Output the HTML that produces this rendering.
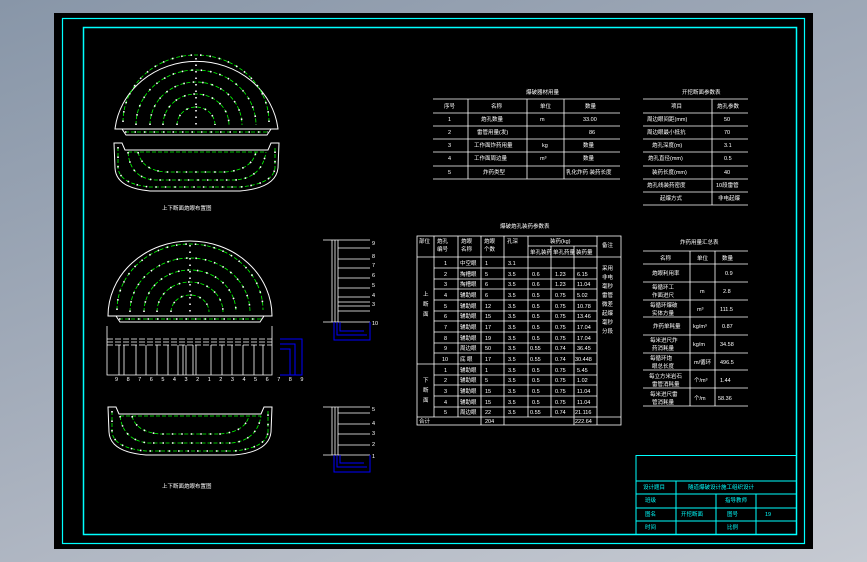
<!DOCTYPE html>
<html><head><meta charset="utf-8"><style>
html,body{margin:0;padding:0;width:867px;height:562px;overflow:hidden;background:linear-gradient(160deg,#8896a8 0%,#a9b1be 55%,#c6cad2 100%);}
svg{position:absolute;left:0;top:0}
text{font-family:"Liberation Sans","Noto Sans CJK SC",sans-serif;fill:#fff;font-size:5.5px}
.c text{fill:#00ffff}
</style></head><body>
<svg width="867" height="562" viewBox="0 0 867 562">
<rect x="54" y="13" width="759" height="536" fill="#000"/>
<rect x="62.5" y="18.5" width="742" height="525" fill="none" stroke="#00ffff" stroke-width="1.2"/>
<rect x="83.5" y="27.5" width="713" height="507" fill="none" stroke="#00ffff" stroke-width="1.5"/>

<!-- Dome 1 -->
<g fill="none">
<path d="M115,129 A82,76 0 0 1 278,129 Z" stroke="#fff" stroke-width="1"/>
<path d="M122,129 L126,135 L267,135 L271,129" stroke="#fff"/>
<g stroke="#0f0" stroke-dasharray="4 2" stroke-width="0.8">
<path d="M123,122 A73,67 0 0 1 269,122"/><path d="M136,125 A60,55 0 0 1 256,125"/>
<path d="M150,125 A46,43 0 0 1 242,125"/><path d="M163,125 A33,31 0 0 1 229,125"/>
<path d="M177,125 A19,18 0 0 1 215,125"/><path d="M125,132 L268,132"/>
</g>
<g stroke="#fff" stroke-dasharray="1.5 8" stroke-width="1.6">
<path d="M123,122 A73,67 0 0 1 269,122"/><path d="M136,125 A60,55 0 0 1 256,125"/>
<path d="M150,125 A46,43 0 0 1 242,125"/><path d="M163,125 A33,31 0 0 1 229,125"/>
<path d="M177,125 A19,18 0 0 1 215,125"/><path d="M125,132 L268,132"/>
<path d="M196,58 L196,125" stroke-dasharray="1.5 5"/>
</g>
<!-- Bench 1 -->
<path d="M114,143 L122,143 L125,150 L268,150 L271,143 L279,143 L278,168 Q276,188 240,191 L150,191 Q116,188 115,168 Z" stroke="#fff"/>
<g stroke="#0f0" stroke-dasharray="4 2" stroke-width="0.8">
<path d="M118,147 L118,168 Q120,184 150,187 L240,187 Q273,184 275,168 L275,147"/>
<path d="M128,152 Q130,178 155,180 L235,180 Q262,178 266,152"/>
<path d="M138,152 Q142,170 165,172 L225,172 Q252,170 256,152"/>
<path d="M128,152 L266,152"/>
</g>
<g stroke="#fff" stroke-dasharray="1.5 8" stroke-width="1.6">
<path d="M118,147 L118,168 Q120,184 150,187 L240,187 Q273,184 275,168 L275,147"/>
<path d="M128,152 Q130,178 155,180 L235,180 Q262,178 266,152"/>
<path d="M138,152 Q142,170 165,172 L225,172 Q252,170 256,152"/>
</g>

<!-- Dome 2 -->
<path d="M108,316 A82,75 0 0 1 272,316 Z" stroke="#fff"/>
<path d="M116,316 L120,322 L260,322 L264,316" stroke="#fff"/>
<g stroke="#0f0" stroke-dasharray="4 2" stroke-width="0.8">
<path d="M117,310 A73,66 0 0 1 263,310"/><path d="M130,312 A60,54 0 0 1 250,312"/>
<path d="M144,312 A46,42 0 0 1 236,312"/><path d="M157,312 A33,30 0 0 1 223,312"/>
<path d="M171,312 A19,17 0 0 1 209,312"/><path d="M119,319 L262,319"/>
</g>
<g stroke="#fff" stroke-dasharray="1.5 8" stroke-width="1.6">
<path d="M117,310 A73,66 0 0 1 263,310"/><path d="M130,312 A60,54 0 0 1 250,312"/>
<path d="M144,312 A46,42 0 0 1 236,312"/><path d="M157,312 A33,30 0 0 1 223,312"/>
<path d="M171,312 A19,17 0 0 1 209,312"/><path d="M119,319 L262,319"/>
<path d="M190,245 L190,312" stroke-dasharray="1.5 5"/>
</g>
<!-- Section -->
<g stroke="#fff" stroke-width="0.8">
<path d="M107,326 L107,375 L272,375 L272,326"/>
<path d="M107,339 L272,339 M107,342 L272,342 M107,345 L272,345" stroke-dasharray="6 2"/>
<path d="M119,345 V375 M124,345 V375 M136,345 V375 M146,345 V375 M157,345 V375 M168,345 V375 M178,345 V375 M183,345 V375 M186,345 V375 M193,345 V375 M196,345 V375 M211,345 V375 M222,345 V375 M232,345 V375 M243,345 V375 M254,345 V375 M263,345 V375"/>
</g>
<text x="115" y="381" font-size="7" letter-spacing="3.5">9 8 7 6 5 4 3 2 1 2 3 4 5 6 7 8 9</text>
<path d="M280,339 H302 V375 H280 M280,344 H295 V375 M280,349 H290 V375" stroke="#00f" stroke-width="1"/>
<!-- Bench 2 -->
<path d="M108,407 L116,407 L119,414 L261,414 L264,407 L272,407 L271,432 Q269,452 234,455 L146,455 Q110,452 109,432 Z" stroke="#fff"/>
<g stroke="#0f0" stroke-dasharray="4 2" stroke-width="0.8">
<path d="M112,411 L112,432 Q114,448 146,451 L234,451 Q266,448 268,432 L268,411"/>
<path d="M120,416 Q123,440 148,443 L232,443 Q257,440 261,416"/>
<path d="M132,416 Q136,432 160,434 L220,434 Q245,432 249,416"/>
<path d="M120,416 L261,416"/>
</g>
<g stroke="#fff" stroke-dasharray="1.5 8" stroke-width="1.6">
<path d="M112,411 L112,432 Q114,448 146,451 L234,451 Q266,448 268,432 L268,411"/>
<path d="M120,416 Q123,440 148,443 L232,443 Q257,440 261,416"/>
<path d="M132,416 Q136,432 160,434 L220,434 Q245,432 249,416"/>
</g>
<!-- side views -->
<g stroke="#fff" stroke-width="0.8">
<path d="M323,240 H370 M323,322 H370 M332,240 V322 M335,240 V322 M338,240 V322" />
<path d="M338,248 H370 M338,259 H370 M338,268 H370 M338,278 H370 M338,288 H370 M338,297 H370 M338,302 H370 M338,306 H370 M338,311 H370"/>
<path d="M323,407 H370 M323,455 H370 M332,407 V455 M335,407 V455 M338,407 V455"/>
<path d="M338,413 H370 M338,424 H370 M338,434 H370 M338,445 H370"/>
</g>
<path d="M334,322 V340 H370 V322 M337,322 V335 H367 M340,322 V331 H364" stroke="#00f"/>
<path d="M334,455 V472 H370 V455 M337,455 V467 H367 M340,455 V463 H364" stroke="#00f"/>
</g>
<g font-size="6.5"><text x="372" y="245">9</text><text x="372" y="258">8</text><text x="372" y="267">7</text><text x="372" y="277">6</text><text x="372" y="287">5</text><text x="372" y="297">4</text><text x="372" y="306">3</text><text x="372" y="325">10</text>
<text x="372" y="411">5</text><text x="372" y="425">4</text><text x="372" y="435">3</text><text x="372" y="446">2</text><text x="372" y="458">1</text></g>
<text x="162" y="210">上下断面炮眼布置图</text>
<text x="162" y="488">上下断面炮眼布置图</text>

<!-- Table 1 -->
<text x="526" y="94">爆破器材用量</text>
<g stroke="#fff" stroke-width="0.8" fill="none">
<path d="M433,99 H620 M433,113 H620 M433,126 H620 M433,139 H620 M433,152 H620 M433,166 H620 M433,179 H620 M468,99 V179 M527,99 V179 M564,99 V179"/>
</g>
<text x="444" y="108">序号</text><text x="491" y="108">名称</text><text x="540" y="108">单位</text><text x="585" y="108">数量</text>
<text x="448" y="121">1</text><text x="481" y="121">炮孔数量</text><text x="540" y="121">m</text><text x="583" y="121">33.00</text>
<text x="448" y="134">2</text><text x="477" y="134">雷管用量(发)</text><text x="589" y="134">86</text>
<text x="448" y="147">3</text><text x="474" y="147">工作面炸药用量</text><text x="542" y="147">kg</text><text x="583" y="147">数量</text>
<text x="448" y="160">4</text><text x="474" y="160">工作面周边量</text><text x="540" y="160">m³</text><text x="583" y="160">数量</text>
<text x="448" y="174">5</text><text x="483" y="174">炸药类型</text><text x="566" y="174">乳化炸药 装药长度</text>
<!-- Table 2 -->
<text x="682" y="94">开挖断面参数表</text>
<g stroke="#fff" stroke-width="0.8" fill="none">
<path d="M643,99 H748 M643,113 H748 M643,126 H748 M643,139 H748 M643,152 H748 M643,166 H748 M643,179 H748 M643,192 H748 M643,205 H748 M712,99 V205"/>
</g>
<text x="671" y="108">项目</text><text x="717" y="108">炮孔参数</text>
<text x="647" y="121">周边眼间距(mm)</text><text x="724" y="121">50</text>
<text x="647" y="134">周边眼最小抵抗</text><text x="724" y="134">70</text>
<text x="652" y="147">炮孔深度(m)</text><text x="724" y="147">3.1</text>
<text x="648" y="160">炮孔直径(mm)</text><text x="724" y="160">0.5</text>
<text x="652" y="174">装药长度(mm)</text><text x="724" y="174">40</text>
<text x="647" y="187">炮孔线装药密度</text><text x="716" y="187">10段雷管</text>
<text x="660" y="200">起爆方式</text><text x="718" y="200">非电起爆</text>
<!-- Table 3 -->
<text x="500" y="228">爆破炮孔装药参数表</text>
<g stroke="#fff" stroke-width="0.8" fill="none">
<rect x="417" y="236" width="204" height="189"/>
<path d="M417,257 H597 M434,268 H597 M434,279 H597 M434,289 H597 M434,300 H597 M434,311 H597 M434,321 H597 M434,332 H597 M434,343 H597 M434,353 H597 M417,364 H597 M434,375 H597 M434,385 H597 M434,396 H597 M434,407 H597 M417,417 H621 M597,257 H621"/>
<path d="M434,236 V417 M458,236 V417 M481,236 V425 M504,236 V425 M528,236 V417 M551,246 V417 M574,246 V425 M597,236 V425 M528,246 H597"/>
</g>
<text x="419" y="243">部位</text><text x="437" y="243">炮孔</text><text x="437" y="251">编号</text><text x="461" y="243">炮眼</text><text x="461" y="251">名称</text><text x="484" y="243">炮眼</text><text x="484" y="251">个数</text><text x="507" y="243">孔深</text><text x="550" y="243">装药(kg)</text><text x="530" y="254">单孔装药</text><text x="553" y="254">单孔药量</text><text x="576" y="254">装药量</text><text x="602" y="247">备注</text>
<text x="423" y="296">上</text><text x="423" y="306">断</text><text x="423" y="316">面</text>
<text x="423" y="382">下</text><text x="423" y="392">断</text><text x="423" y="402">面</text>
<text x="419" y="423">合计</text><text x="485" y="423">204</text><text x="575" y="423">222.64</text>
<g font-size="5">
<text x="444" y="265">1</text><text x="460" y="265">中空眼</text><text x="485" y="265">1</text><text x="508" y="265">3.1</text>
<text x="444" y="276">2</text><text x="460" y="276">掏槽眼</text><text x="485" y="276">5</text><text x="508" y="276">3.5</text><text x="532" y="276">0.6</text><text x="555" y="276">1.23</text><text x="577" y="276">6.15</text>
<text x="444" y="286">3</text><text x="460" y="286">掏槽眼</text><text x="485" y="286">6</text><text x="508" y="286">3.5</text><text x="532" y="286">0.6</text><text x="555" y="286">1.23</text><text x="577" y="286">11.04</text>
<text x="444" y="297">4</text><text x="460" y="297">辅助眼</text><text x="485" y="297">6</text><text x="508" y="297">3.5</text><text x="532" y="297">0.5</text><text x="555" y="297">0.75</text><text x="577" y="297">5.02</text>
<text x="444" y="308">5</text><text x="460" y="308">辅助眼</text><text x="485" y="308">12</text><text x="508" y="308">3.5</text><text x="532" y="308">0.5</text><text x="555" y="308">0.75</text><text x="577" y="308">10.78</text>
<text x="444" y="318">6</text><text x="460" y="318">辅助眼</text><text x="485" y="318">15</text><text x="508" y="318">3.5</text><text x="532" y="318">0.5</text><text x="555" y="318">0.75</text><text x="577" y="318">13.46</text>
<text x="444" y="329">7</text><text x="460" y="329">辅助眼</text><text x="485" y="329">17</text><text x="508" y="329">3.5</text><text x="532" y="329">0.5</text><text x="555" y="329">0.75</text><text x="577" y="329">17.04</text>
<text x="444" y="340">8</text><text x="460" y="340">辅助眼</text><text x="485" y="340">19</text><text x="508" y="340">3.5</text><text x="532" y="340">0.5</text><text x="555" y="340">0.75</text><text x="577" y="340">17.04</text>
<text x="444" y="350">9</text><text x="460" y="350">周边眼</text><text x="485" y="350">50</text><text x="508" y="350">3.5</text><text x="530" y="350">0.55</text><text x="555" y="350">0.74</text><text x="577" y="350">36.45</text>
<text x="442" y="361">10</text><text x="460" y="361">底 眼</text><text x="485" y="361">17</text><text x="508" y="361">3.5</text><text x="530" y="361">0.55</text><text x="555" y="361">0.74</text><text x="575" y="361">30.448</text>
<text x="444" y="372">1</text><text x="460" y="372">辅助眼</text><text x="485" y="372">1</text><text x="508" y="372">3.5</text><text x="532" y="372">0.5</text><text x="555" y="372">0.75</text><text x="577" y="372">5.45</text>
<text x="444" y="382">2</text><text x="460" y="382">辅助眼</text><text x="485" y="382">5</text><text x="508" y="382">3.5</text><text x="532" y="382">0.5</text><text x="555" y="382">0.75</text><text x="577" y="382">1.02</text>
<text x="444" y="393">3</text><text x="460" y="393">辅助眼</text><text x="485" y="393">15</text><text x="508" y="393">3.5</text><text x="532" y="393">0.5</text><text x="555" y="393">0.75</text><text x="577" y="393">11.04</text>
<text x="444" y="404">4</text><text x="460" y="404">辅助眼</text><text x="485" y="404">15</text><text x="508" y="404">3.5</text><text x="532" y="404">0.5</text><text x="555" y="404">0.75</text><text x="577" y="404">11.04</text>
<text x="444" y="414">5</text><text x="460" y="414">周边眼</text><text x="485" y="414">22</text><text x="508" y="414">3.5</text><text x="530" y="414">0.55</text><text x="555" y="414">0.74</text><text x="575" y="414">21.116</text>
<text x="602" y="270">采用</text><text x="602" y="279">非电</text><text x="602" y="288">毫秒</text><text x="602" y="297">雷管</text><text x="602" y="306">微差</text><text x="602" y="315">起爆</text><text x="602" y="324">毫秒</text><text x="602" y="333">分段</text>
</g>
<!-- Table 4 -->
<text x="680" y="244">炸药用量汇总表</text>
<g stroke="#fff" stroke-width="0.8" fill="none">
<path d="M643,251 H748 M643,264 H748 M643,282 H748 M643,300 H748 M643,317 H748 M643,335 H748 M643,353 H748 M643,370 H748 M643,388 H748 M643,406 H748 M690,251 V406 M715,251 V406"/>
</g>
<text x="660" y="260">名称</text><text x="697" y="260">单位</text><text x="722" y="260">数量</text>
<text x="652" y="275">炮眼利用率</text><text x="725" y="275">0.9</text>
<text x="652" y="289">每循环工</text><text x="652" y="297">作面进尺</text><text x="700" y="293">m</text><text x="723" y="293">2.8</text>
<text x="650" y="307">每循环爆破</text><text x="652" y="315">实体方量</text><text x="697" y="311">m³</text><text x="720" y="311">111.5</text>
<text x="653" y="328">炸药单耗量</text><text x="693" y="328">kg/m³</text><text x="722" y="328">0.87</text>
<text x="650" y="342">每米进尺炸</text><text x="652" y="350">药消耗量</text><text x="693" y="346">kg/m</text><text x="720" y="346">34.58</text>
<text x="650" y="360">每循环炮</text><text x="652" y="368">眼总长度</text><text x="694" y="364">m/循环</text><text x="720" y="364">496.5</text>
<text x="649" y="378">每立方米岩石</text><text x="652" y="386">雷管消耗量</text><text x="694" y="382">个/m³</text><text x="720" y="382">1.44</text>
<text x="650" y="396">每米进尺雷</text><text x="652" y="404">管消耗量</text><text x="694" y="400">个/m</text><text x="718" y="400">58.36</text>

<!-- Title block -->
<g class="c">
<path d="M636,534 V455.5 H796 M636,481 H796 M636,494 H796 M636,508 H796 M636,521 H796 M676,481 V534 M716,494 V534 M756,494 V534" stroke="#00ffff" stroke-width="1" fill="none"/>
<text x="643" y="489">设计题目</text><text x="688" y="489">隧道爆破设计施工组织设计</text>
<text x="645" y="502">班级</text><text x="725" y="502">指导教师</text>
<text x="645" y="516">图名</text><text x="681" y="516">开挖断面</text><text x="727" y="516">图号</text><text x="765" y="516">19</text>
<text x="645" y="529">时间</text><text x="727" y="529">比例</text>
</g>
</svg>
</body></html>
